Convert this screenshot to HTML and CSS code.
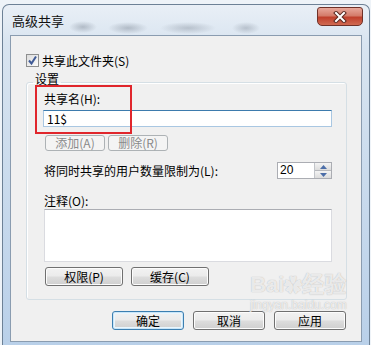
FILE: index.html
```html
<!DOCTYPE html>
<html lang="zh-CN">
<head>
    <meta charset="UTF-8">
    <title>高级共享</title>
    <link rel="stylesheet" href="styles.css">
</head>
<body>
    <div class="window">
        <div class="titlebar">
            <span class="title">高级共享</span>
            <button class="close-btn">
                <svg width="14" height="12" viewBox="0 0 14 12">
                    <path d="M3 2 L11 10 M11 2 L3 10" stroke="#5a2a22" stroke-width="4" stroke-linecap="square"/>
                    <path d="M3 2 L11 10 M11 2 L3 10" stroke="#fff" stroke-width="2" stroke-linecap="square"/>
                </svg>
            </button>
        </div>
        <div class="client">
            <label class="check-row">
                <span class="checkbox">
                    <svg width="11" height="11" viewBox="0 0 11 11">
                        <path d="M2 5.5 L4.5 8.5 L9 1.5" fill="none" stroke="#3f5a96" stroke-width="2"/>
                    </svg>
                </span>
                <span>共享此文件夹(S)</span>
            </label>

            <fieldset class="group">
                <legend>设置</legend>
                <div class="field-label">共享名(H):</div>
                <input class="text-input focused" type="text" value="11$">
                <div class="btn-row small">
                    <button class="btn disabled">添加(A)</button>
                    <button class="btn disabled">删除(R)</button>
                </div>
                <div class="limit-row">
                    <span>将同时共享的用户数量限制为(L):</span>
                    <div class="spinner">
                        <span class="spin-value">20</span>
                        <div class="spin-btns">
                            <span class="spin-btn"><svg width="7" height="4" viewBox="0 0 7 4"><path d="M0 4 L3.5 0 L7 4 Z" fill="#4c6ea8"/></svg></span>
                            <span class="spin-btn"><svg width="7" height="4" viewBox="0 0 7 4"><path d="M0 0 L3.5 4 L7 0 Z" fill="#4c6ea8"/></svg></span>
                        </div>
                    </div>
                </div>
                <div class="field-label comment-label">注释(O):</div>
                <textarea class="comment"></textarea>
                <div class="btn-row">
                    <button class="btn wide">权限(P)</button>
                    <button class="btn wide">缓存(C)</button>
                </div>
            </fieldset>

            <div class="dialog-buttons">
                <button class="btn footer default">确定</button>
                <button class="btn footer">取消</button>
                <button class="btn footer">应用</button>
            </div>
        </div>
    </div>

    <!-- 截图上的标注和水印 -->
    <div class="highlight"></div>
    <div class="watermark">
        <span class="wm-logo">Bai<span class="paw">✿</span>经验</span>
        <span class="wm-url">jingyan.baidu.com</span>
    </div>
</body>
</html>
```

FILE: styles.css
```css
body {
    margin: 0;
    height: 345px;
    overflow: hidden;
    background-color: #eef3f8;
    font-family: "Noto Sans CJK SC", "Liberation Sans", sans-serif;
    font-size: 12px;
    color: #000;
}
.window {
    position: relative;
    width: 368px;
    height: 341px;
    margin: 4px 0 0 2px;
    padding: 0 7px;
    box-sizing: border-box;
    border: 1px solid #6d8196;
    border-bottom: none;
    border-radius: 7px 7px 0 0;
    background:
        radial-gradient(ellipse 14px 6px at 80px 22px, rgba(90,100,115,0.35), transparent),
        radial-gradient(ellipse 20px 6px at 125px 23px, rgba(90,100,115,0.35), transparent),
        radial-gradient(ellipse 28px 6px at 185px 23px, rgba(90,100,115,0.3), transparent),
        radial-gradient(ellipse 14px 6px at 243px 23px, rgba(90,100,115,0.3), transparent),
        linear-gradient(#e9eff6 0, #d8e4f0 40px, #b9d0e9 100%);
}
.titlebar {
    display: flex;
    align-items: center;
    height: 30px;
}
.title {
    padding-left: 2px;
    font-size: 13px;
    color: #111;
}
.close-btn {
    align-self: flex-start;
    display: flex;
    align-items: center;
    justify-content: center;
    width: 46px;
    height: 19px;
    margin: 2px -1px 0 auto;
    padding: 0;
    border: 1px solid #6f3128;
    border-radius: 3px 3px 5px 5px;
    background: linear-gradient(#e8a89b 0, #d47c6a 45%, #c0402c 55%, #d06a52 100%);
}
.client {
    height: 307px;
    box-sizing: border-box;
    border: 1px solid #8a9cb0;
    background-color: #f0f0f0;
}
.check-row {
    display: flex;
    align-items: center;
    gap: 3px;
    height: 13px;
    margin: 18px 0 0 15px;
    line-height: 13px;
}
.checkbox {
    display: flex;
    align-items: center;
    justify-content: center;
    width: 11px;
    height: 11px;
    border: 1px solid #8e8f8f;
    background: linear-gradient(135deg, #dcdcdc, #fbfbfb);
}
.group {
    margin: 5px 15px 0 15px;
    padding: 0 14px 13px 17px;
    border: 1px solid #d5dfe5;
    border-radius: 3px;
    box-shadow: inset 1px 1px 0 #fff;
}
.group legend {
    margin-left: -11px;
    padding: 0 2px 6px 2px;
    line-height: 14px;
}
.field-label {
    line-height: 14px;
}
.text-input {
    display: block;
    width: 289px;
    height: 17px;
    margin: 4px -1px 0 -1px;
    padding: 0 3px;
    box-sizing: border-box;
    border: 1px solid #a9c7e2;
    border-top-color: #3d7bad;
    font-family: inherit;
    font-size: 12px;
    background-color: #fff;
}
.btn-row {
    display: flex;
    gap: 8px;
    margin: 5px 0 0 1px;
}
.btn-row.small {
    gap: 3px;
    margin-top: 8px;
}
.btn {
    height: 19px;
    padding: 0;
    border: 1px solid #707070;
    border-radius: 3px;
    font-family: inherit;
    font-size: 12px;
    color: #000;
    line-height: 17px;
    background: linear-gradient(#f2f2f2 0, #ebebeb 48%, #dddddd 52%, #cfcfcf 100%);
    box-shadow: inset 0 0 0 1px #fcfcfc;
}
.btn.disabled {
    width: 60px;
    height: 16px;
    line-height: 14px;
    color: #8a8a8a;
    border-color: #adb2b5;
    background: #f4f4f4;
    box-shadow: none;
}
.btn.wide {
    width: 78px;
}
.limit-row {
    display: flex;
    align-items: center;
    justify-content: space-between;
    height: 17px;
    margin-top: 11px;
}
.spinner {
    display: flex;
    width: 55px;
    height: 17px;
    box-sizing: border-box;
    border: 1px solid #abadb3;
    background-color: #fff;
}
.spin-value {
    flex: 1;
    padding-left: 2px;
    line-height: 15px;
    font-family: "Liberation Sans", sans-serif;
}
.spin-btns {
    display: flex;
    flex-direction: column;
    width: 16px;
    border-left: 1px solid #c2c5ca;
}
.spin-btn {
    display: flex;
    flex: 1;
    align-items: center;
    justify-content: center;
    background: linear-gradient(#f4f4f4, #dcdcdc);
    border-bottom: 1px solid #b7b9bd;
}
.spin-btn:last-child {
    border-bottom: none;
}
.comment-label {
    margin-top: 15px;
}
.comment {
    display: block;
    width: 288px;
    height: 53px;
    margin: 1px 0 0 0;
    box-sizing: border-box;
    border: 1px solid #dadbe0;
    border-top-color: #abadb3;
    background-color: #fff;
    resize: none;
}
.dialog-buttons {
    display: flex;
    justify-content: flex-end;
    gap: 9px;
    margin: 11px 15px 0 0;
}
.btn.footer {
    width: 72px;
}
.btn.default {
    border-color: #3c7fb1;
    box-shadow: inset 0 0 0 1px #cbe6f8, inset 0 0 0 2px #eaf6fd;
}
.highlight {
    position: absolute;
    left: 35px;
    top: 85px;
    width: 93px;
    height: 45px;
    border: 2px solid #e0262c;
}
.watermark {
    position: absolute;
    left: 250px;
    top: 273px;
    display: flex;
    flex-direction: column;
    align-items: center;
    color: rgba(255,255,255,0.75);
    text-shadow: 0 0 1px rgba(120,120,120,0.6);
    pointer-events: none;
}
.wm-logo {
    font-family: "Liberation Sans", sans-serif;
    font-size: 22px;
    font-weight: bold;
    line-height: 24px;
}
.paw {
    font-size: 18px;
}
.wm-url {
    font-family: "Liberation Sans", sans-serif;
    font-size: 12px;
    line-height: 14px;
}
```
